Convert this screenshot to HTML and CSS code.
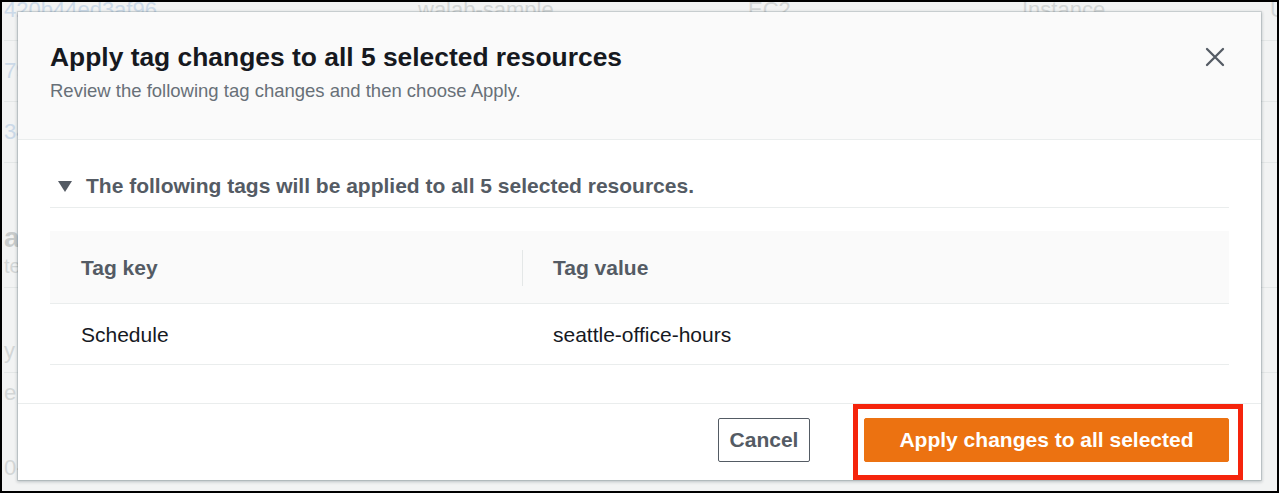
FILE: index.html
```html
<!DOCTYPE html>
<html lang="en">
<head>
<meta charset="utf-8">
<title>Apply tag changes</title>
<link rel="stylesheet" href="styles.css">
</head>
<body>
<div class="frame">
  <div class="page">
    <div class="bg-row first">
      <span class="bg-cell link">420b44ed3af96</span>
      <span class="bg-cell">walab-sample</span>
      <span class="bg-cell">EC2</span>
      <span class="bg-cell">Instance</span>
      <span class="bg-cell">U</span>
    </div>
    <div class="bg-row"><span class="bg-cell link">79</span></div>
    <div class="bg-row"><span class="bg-cell link">34</span></div>
    <div class="bg-section">
      <div class="bg-heading">a</div>
      <div class="bg-sub">te</div>
    </div>
    <div class="bg-row row-a"><span class="bg-cell">y</span></div>
    <div class="bg-row row-b"><span class="bg-cell">e</span></div>
    <div class="bg-row row-c"><span class="bg-cell">0-</span></div>
  </div>

  <div class="modal" role="dialog" aria-labelledby="modal-title">
    <div class="modal-header">
      <div class="heading">
        <h2 id="modal-title" class="title">Apply tag changes to all 5 selected resources</h2>
        <p class="subtitle">Review the following tag changes and then choose Apply.</p>
      </div>
      <button class="close" aria-label="Close">
        <svg width="20" height="20" viewBox="0 0 20 20" aria-hidden="true">
          <path d="M2 2 L18 18 M18 2 L2 18" stroke="#545b64" stroke-width="2.3" stroke-linecap="round" fill="none"/>
        </svg>
      </button>
    </div>

    <div class="modal-body">
      <div class="expander">
        <span class="caret"></span>
        <span>The following tags will be applied to all 5 selected resources.</span>
      </div>
      <table class="tags">
        <thead>
          <tr><th class="col-key">Tag key</th><th class="col-val">Tag value</th></tr>
        </thead>
        <tbody>
          <tr><td>Schedule</td><td>seattle-office-hours</td></tr>
        </tbody>
      </table>
    </div>

    <div class="modal-footer">
      <button class="btn btn-cancel">Cancel</button>
      <button class="btn btn-primary">Apply changes to all selected<span class="highlight"></span></button>
    </div>
  </div>
</div>
</body>
</html>
```

FILE: styles.css
```css
* { box-sizing: border-box; }

html, body {
  margin: 0;
  padding: 0;
  background: #ffffff;
}

body {
  font-family: "Liberation Sans", Arial, sans-serif;
  color: #16191f;
}

.frame {
  position: relative;
  width: 1279px;
  height: 493px;
  border: 2px solid #000;
  background: #f2f3f3;
  overflow: hidden;
}

/* faded page behind the modal */
.page {
  margin-top: -22px;
  padding-left: 2px;
  display: flex;
  flex-direction: column;
}

.bg-row {
  display: grid;
  grid-template-columns: 414px 330px 274px 248px 1fr;
  align-items: center;
  height: 61px;
  border-bottom: 1px solid #e4e7e7;
  font-size: 22px;
  color: #d3d6d6;
}

.bg-row.row-a { height: 85px; align-items: end; padding-bottom: 8px; }
.bg-row.row-b { height: 40px; border-bottom: 0; }
.bg-row.row-c { height: 80px; align-items: end; padding-bottom: 12px; border-bottom: 0; }

.bg-cell.link { color: #cbd9e8; }

.bg-section {
  height: 125px;
  display: flex;
  flex-direction: column;
  justify-content: flex-end;
  padding-bottom: 8px;
  border-bottom: 1px solid #e4e7e7;
}

.bg-heading {
  font-size: 28px;
  line-height: 30px;
  font-weight: bold;
  color: #c8cbcb;
}

.bg-sub {
  font-size: 20px;
  line-height: 26px;
  color: #d3d6d6;
}

/* modal dialog, overlaid on the page */
.modal {
  position: absolute;
  left: 16px;
  top: 10px;
  width: 1243px;
  height: 468px;
  background: #ffffff;
  display: flex;
  flex-direction: column;
  box-shadow: 0 0 0 1px rgba(0, 28, 36, 0.10), 0 1px 3px 1px rgba(0, 28, 36, 0.22);
}

.modal-header {
  height: 128px;
  padding: 29px 32px 0 32px;
  background: #fafafa;
  border-bottom: 1px solid #eaeded;
  display: flex;
  justify-content: space-between;
  align-items: flex-start;
}

.title {
  margin: 0;
  font-size: 26.4px;
  line-height: 32px;
  font-weight: bold;
  color: #16191f;
}

.subtitle {
  margin: 6px 0 0 0;
  font-size: 18.5px;
  line-height: 24px;
  color: #687078;
}

.close {
  margin: 6px 4px 0 0;
  padding: 0;
  border: 0;
  background: transparent;
  width: 20px;
  height: 20px;
  display: flex;
}

.modal-body {
  flex: 1;
  padding: 34px 32px 0 32px;
}

.expander {
  display: flex;
  align-items: center;
  gap: 14px;
  padding: 0 0 9px 8px;
  border-bottom: 1px solid #eaeded;
  font-size: 21px;
  line-height: 24px;
  font-weight: bold;
  color: #545b64;
}

.caret {
  width: 0;
  height: 0;
  border-left: 7px solid transparent;
  border-right: 7px solid transparent;
  border-top: 11px solid #545b64;
}

.tags {
  margin-top: 23px;
  width: 100%;
  border-collapse: collapse;
  font-size: 21px;
  line-height: 24px;
}

.tags th {
  text-align: left;
  font-weight: bold;
  color: #545b64;
  background: #fafafa;
  padding: 25px 31px 23px 31px;
  border-bottom: 1px solid #eaeded;
  position: relative;
}

.tags th.col-key { width: 472px; }

.tags th.col-val::before {
  content: "";
  position: absolute;
  left: 0;
  top: 19px;
  height: 36px;
  border-left: 1px solid #e4e7e7;
}

.tags td {
  padding: 19px 31px 17px 31px;
  border-bottom: 1px solid #eaeded;
  color: #16191f;
}

.modal-footer {
  height: 77px;
  padding: 14px 32px 0 32px;
  border-top: 1px solid #eaeded;
  display: flex;
  justify-content: flex-end;
  align-items: flex-start;
  gap: 54px;
}

.btn {
  height: 44px;
  border-radius: 2px;
  font-family: "Liberation Sans", Arial, sans-serif;
  font-size: 21px;
  font-weight: bold;
  padding: 0;
  cursor: pointer;
}

.btn-cancel {
  width: 92px;
  background: #ffffff;
  border: 1px solid #545b64;
  color: #545b64;
}

.btn-primary {
  position: relative;
  width: 365px;
  background: #ec7211;
  border: 1px solid #ec7211;
  color: #ffffff;
}

.highlight {
  position: absolute;
  left: -12px;
  top: -15px;
  right: -15px;
  bottom: -19px;
  border: 5px solid #f5240c;
  pointer-events: none;
}
```
